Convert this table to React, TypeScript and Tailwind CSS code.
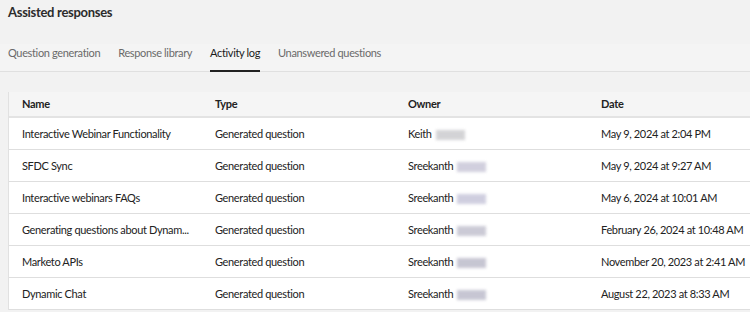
import React from "react";

const rows = [
  { name: "Interactive Webinar Functionality", owner: "Keith", date: "May 9, 2024 at 2:04 PM", blurTone: "bg-[#c9c9cc]" },
  { name: "SFDC Sync", owner: "Sreekanth", date: "May 9, 2024 at 9:27 AM", blurTone: "bg-[#c6c4d6]" },
  { name: "Interactive webinars FAQs", owner: "Sreekanth", date: "May 6, 2024 at 10:01 AM", blurTone: "bg-[#c4c3d8]" },
  { name: "Generating questions about Dynam...", owner: "Sreekanth", date: "February 26, 2024 at 10:48 AM", blurTone: "bg-[#bfbecc]" },
  { name: "Marketo APIs", owner: "Sreekanth", date: "November 20, 2023 at 2:41 AM", blurTone: "bg-[#b9b8c8]" },
  { name: "Dynamic Chat", owner: "Sreekanth", date: "August 22, 2023 at 8:33 AM", blurTone: "bg-[#bab9c9]" },
];

const tabs = ["Question generation", "Response library", "Activity log", "Unanswered questions"];

export default function App() {
  return (
    <div
      className="w-[750px] h-[312px] overflow-hidden bg-[#f2f2f2] text-[#222]"
      style={{ fontFamily: "Lato, 'Open Sans', sans-serif" }}
    >
      <div className="px-2 pt-[3px] h-[44px]">
        <h1 className="text-[13px] tracking-[-0.3px] font-bold leading-[18px] text-[#2c2c2c]">Assisted responses</h1>
      </div>
      <div className="bg-[#f4f4f4] border-b border-[#e0e0e0] h-[28px] flex items-start gap-[18px] px-2">
        {tabs.map((t) => {
          const active = t === "Activity log";
          return (
            <div
              key={t}
              className={`relative h-full text-[11px] tracking-[-0.35px] leading-[18px] ${active ? "text-[#1a1a1a]" : "text-[#6a6a6a]"}`}
            >
              {t}
              {active && <div className="absolute left-0 right-0 bottom-[-1px] h-[2px] bg-[#222]" />}
            </div>
          );
        })}
      </div>
      <div className="ml-2 mt-[20px] w-[800px] border-l border-[#e1e1e1]">
        <div className="grid grid-cols-[193px_193px_193px_221px] h-[26px] items-center bg-[#f5f5f5] border-b-2 border-[#e3e3e3] text-[11px] tracking-[-0.3px] font-bold text-[#222]">
          <div className="px-[13px]">Name</div>
          <div className="px-[13px]">Type</div>
          <div className="px-[13px]">Owner</div>
          <div className="px-[13px]">Date</div>
        </div>
        {rows.map((r) => (
          <div
            key={r.name}
            className="grid grid-cols-[193px_193px_193px_221px] h-[32px] items-center bg-white border-b border-[#dedede] text-[11px] tracking-[-0.35px] text-[#222]"
          >
            <div className="px-[13px] pt-[2px] whitespace-nowrap">{r.name}</div>
            <div className="px-[13px] pt-[2px] whitespace-nowrap">Generated question</div>
            <div className="px-[13px] pt-[2px] whitespace-nowrap flex items-center gap-[4px]">
              <span>{r.owner}</span>
              <span className={`inline-block w-[29px] h-[10px] ${r.blurTone} blur-[1.5px] opacity-80`} />
            </div>
            <div className="px-[13px] pt-[2px] whitespace-nowrap">{r.date}</div>
          </div>
        ))}
      </div>
    </div>
  );
}
